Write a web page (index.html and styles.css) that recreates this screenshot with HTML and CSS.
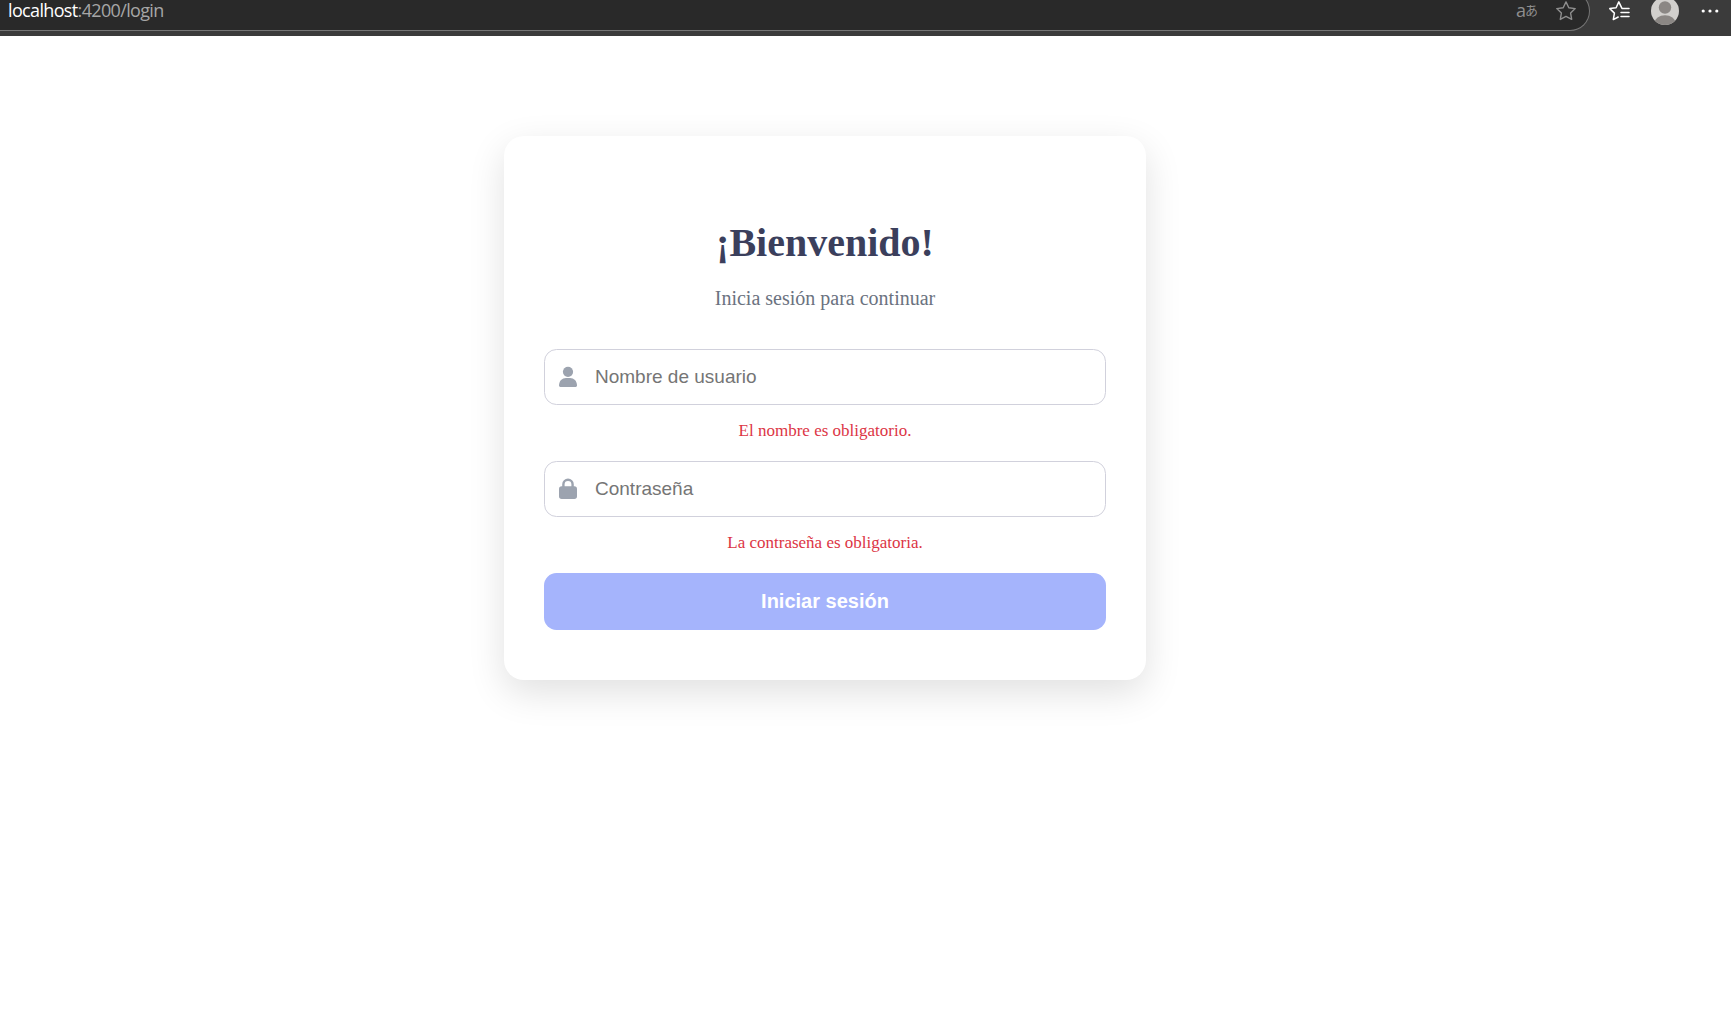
FILE: index.html
```html
<!DOCTYPE html>
<html lang="es">
<head>
<meta charset="utf-8">
<title>Login</title>
<link rel="stylesheet" href="styles.css">
</head>
<body>
<header class="toolbar">
  <div class="address">
    <span class="url"><span class="host">localhost</span>:4200/login</span>
    <span class="translate"><span class="latin">a</span><span class="kana">あ</span></span>
    <svg class="star" width="22" height="22" viewBox="0 0 22 22"><path d="M11 1.9 L13.8 7.7 L20.2 8.6 L15.6 13.1 L16.7 19.4 L11 16.4 L5.3 19.4 L6.4 13.1 L1.8 8.6 L8.2 7.7 Z"/></svg>
  </div>
  <svg class="favorites" width="22" height="22" viewBox="0 0 22 22"><path d="M19.5 8.5 H14 L13.6 7.7 L10.8 1.9 L8.1 7.7 L1.8 8.6 L6.4 13.1 L5.3 19.6 L10.2 17 M13 12.5 H21 M13 16.5 H21 M14 8.5 H21"/></svg>
  <svg class="avatar" width="28" height="28" viewBox="0 0 28 28"><clipPath id="disc"><circle cx="14" cy="14" r="14"/></clipPath><circle cx="14" cy="14" r="14" fill="#d2d0cd"/><g clip-path="url(#disc)" fill="#8b8784"><circle cx="14" cy="10.5" r="6.2"/><ellipse cx="14" cy="26" rx="10.5" ry="7.8"/></g></svg>
  <svg class="more" width="18" height="6" viewBox="0 0 18 6"><circle cx="2.2" cy="3" r="1.6"/><circle cx="9" cy="3" r="1.6"/><circle cx="15.8" cy="3" r="1.6"/></svg>
</header>
<main class="page">
  <form class="card">
    <h1 class="title">¡Bienvenido!</h1>
    <p class="subtitle">Inicia sesión para continuar</p>
    <label class="field">
      <svg class="icon" width="18" height="22" viewBox="0 0 18 22"><circle cx="9" cy="5.8" r="5.1"/><path d="M0 19.6 C0 14.8 3.2 12 7 12 H11 C14.8 12 18 14.8 18 19.6 Q18 21 16.7 21 H1.3 Q0 21 0 19.6Z"/></svg>
      <input class="input" type="text" placeholder="Nombre de usuario">
    </label>
    <p class="error">El nombre es obligatorio.</p>
    <label class="field">
      <svg class="icon" width="18" height="22" viewBox="0 0 18 22"><path d="M3.2 8.2 V6.3 A5.8 5.8 0 0 1 14.8 6.3 V8.2 H15.3 Q18 8.2 18 10.9 V18.3 Q18 21 15.3 21 H2.7 Q0 21 0 18.3 V10.9 Q0 8.2 2.7 8.2 Z M5.6 8.2 H12.4 V6.3 A3.4 3.4 0 0 0 5.6 6.3 Z" fill-rule="evenodd"/></svg>
      <input class="input" type="password" placeholder="Contraseña">
    </label>
    <p class="error">La contraseña es obligatoria.</p>
    <button class="submit" type="button">Iniciar sesión</button>
  </form>
</main>
</body>
</html>
```
FILE: styles.css
```css
* { box-sizing: border-box; }
body {
  margin: 0;
  height: 1014px;
  overflow: hidden;
  background: #fff;
  font-family: "Liberation Serif", "Times New Roman", serif;
}
.toolbar {
  display: flex;
  align-items: center;
  height: 36px;
  padding-bottom: 14px;
  background: #3b3b3b;
  overflow: hidden;
}
.address {
  display: flex;
  flex: none;
  align-items: center;
  width: 1590px;
  height: 40px;
  padding: 0 12px 0 8px;
  border: 1px solid #757575;
  border-left: 0;
  border-radius: 0 20px 20px 0;
  background: #292929;
}
.url {
  flex: 1;
  padding-bottom: 2px;
  font: 18px/24px "Open Sans", sans-serif;
  letter-spacing: -0.65px;
  color: #a6a6a6;
}
.host { color: #fff; }
.translate {
  display: flex;
  align-items: center;
  margin-right: 17px;
  padding-bottom: 2px;
  color: #8e8e8e;
  line-height: 22px;
}
.latin { font: 18px/22px "Open Sans", sans-serif; }
.kana { margin-left: -1px; font: 400 13px/22px "Noto Sans CJK JP", sans-serif; }
.star { fill: none; stroke: #8e8e8e; stroke-width: 1.4; stroke-linejoin: round; }
.favorites {
  flex: none;
  margin-left: 18px;
  fill: none;
  stroke: #fff;
  stroke-width: 1.5;
  stroke-linejoin: round;
  stroke-linecap: round;
}
.avatar { flex: none; margin-left: 21px; }
.more { flex: none; margin-left: 22px; fill: #fff; }
.page { padding: 100px 0 0 504px; }
.card {
  display: flex;
  flex-direction: column;
  width: 642px;
  height: 544px;
  padding: 84px 40px 50px;
  border-radius: 20px;
  background: #fff;
  box-shadow: 0 12.5px 37.5px rgba(0, 0, 0, 0.12);
  text-align: center;
}
.title {
  margin: 0 0 21px;
  font-size: 40px;
  line-height: 46px;
  color: #3b3f5c;
}
.subtitle {
  margin: 0 0 39px;
  font-size: 20px;
  line-height: 23px;
  color: #6b7280;
}
.field {
  display: flex;
  align-items: center;
  height: 56px;
  padding: 0 16px 0 14px;
  border: 1px solid #d1d1dc;
  border-radius: 12.5px;
}
.icon { flex: none; fill: #9ca3af; }
.input {
  flex: 1;
  margin-left: 18px;
  padding: 0;
  border: 0;
  outline: 0;
  background: none;
  font: 19px/22px "Liberation Sans", Arial, sans-serif;
}
.input::placeholder { color: #757575; }
.error {
  margin: 16px 0 20px;
  font-size: 17px;
  line-height: 20px;
  color: #dc3545;
}
.submit {
  height: 57px;
  padding: 0;
  border: 0;
  border-radius: 12.5px;
  background: #a5b4fc;
  font: bold 20px/23px "Liberation Sans", Arial, sans-serif;
  color: #fff;
}
```
